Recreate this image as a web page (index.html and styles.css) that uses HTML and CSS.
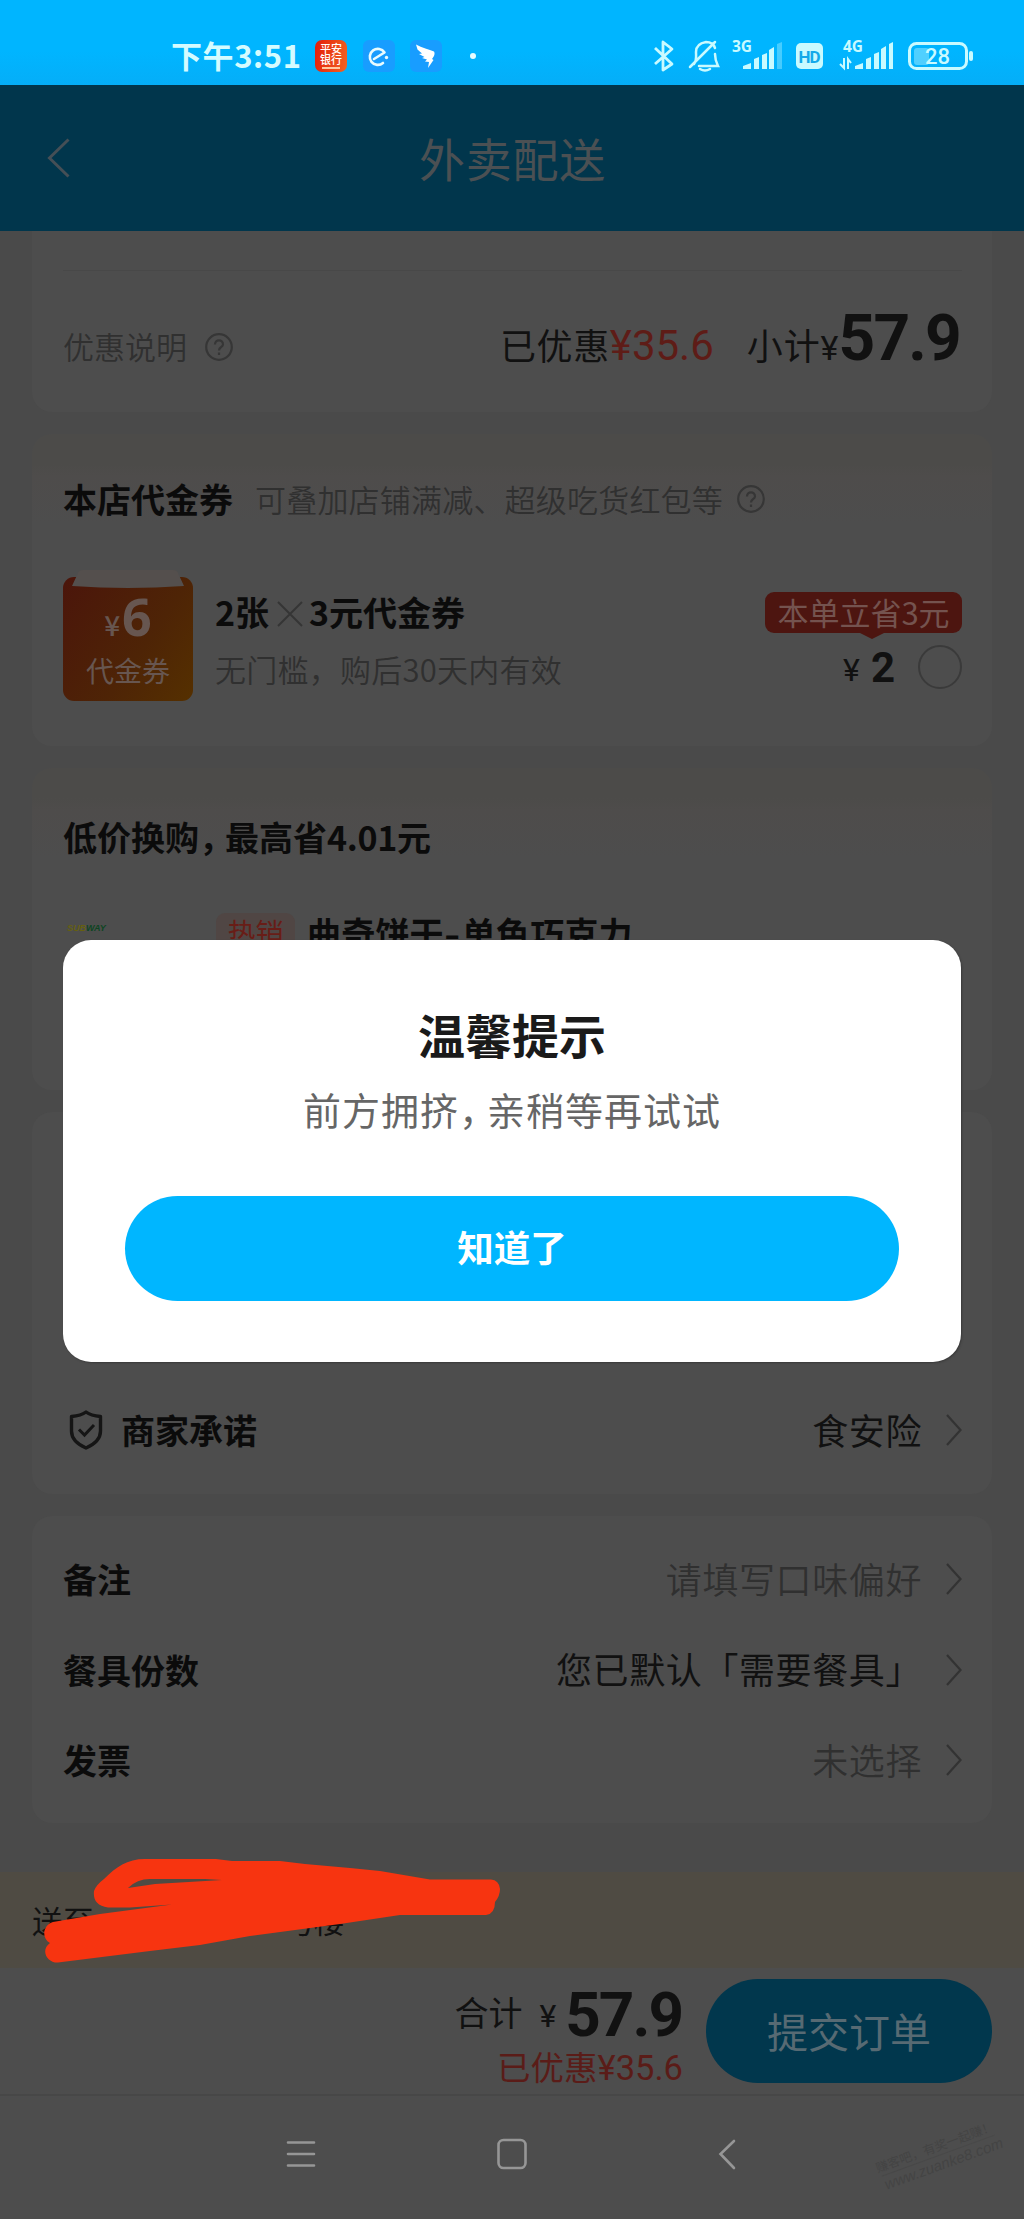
FILE: index.html
```html
<!DOCTYPE html>
<html lang="zh-CN">
<head>
<meta charset="utf-8">
<title>外卖配送</title>
<link rel="stylesheet" href="styles.css">
</head>
<body>
<div class="screen">
  <div class="status">
    <span class="clock">下午3:51</span>
    <span class="app bank"><span>平安</span><span>银行</span><i></i></span>
    <svg class="app" viewBox="0 0 32 32"><rect width="32" height="32" rx="6" fill="#189dff"/><path d="M11 19 21.5 12.5A8 8 0 1 0 20 23" fill="none" stroke="#e8fbff" stroke-width="2.6" stroke-linecap="round" stroke-linejoin="round"/><circle cx="23.500" cy="17.500" r="1.700" fill="#e8fbff"/></svg>
    <svg class="app" viewBox="0 0 32 32"><rect width="32" height="32" rx="6" fill="#189dff"/><path d="M6 4.500C12 8 19 9.500 24 11.500 25.500 14 23.500 17 22 19L23.500 20 18 28 19 22 15 21.500 17 19.500 12 18 14.500 17 9 14 12 13.500 7.500 9.500Z" fill="#fff"/></svg>
    <i class="dot"></i>
    <svg class="signals" width="324" height="40" viewBox="650 36 324 40" fill="none" stroke="#c9faff" stroke-width="3">
      <path d="M655 48 672 64 663 70V42L672 49 655 64" stroke-width="2.800" stroke-linejoin="round"/>
      <path d="M694 64C697 60 696 56 696 52 696 46 700 43 706 42 711 42 714 45 715 48M715 54C715 59 716 62 718 66H699M690 67 715 42M700 69Q705 72 710 69" stroke-width="2.500" stroke-linecap="round"/>
      <g fill="#c9faff" stroke="none">
        <path d="M743 69V66L751 63V69ZM754 59 759 57V69H754ZM762 55 767 53V69H762ZM769 50 774 47V69H769Z"/>
        <path d="M777 44 782 42V69H777Z" opacity=".35"/>
        <rect x="796" y="43" width="27" height="26" rx="5"/>
        <path d="M855 69V66L863 63V69ZM866 59 871 57V69H866ZM874 54 879 52V69H874ZM881 49 886 46V69H881ZM889 44 893 42V69H889Z"/>
        <rect x="969" y="51" width="4" height="10" rx="2"/>
        <rect x="914" y="48" width="15" height="17" rx="3" opacity=".4"/>
      </g>
      <path d="M840 64 844 68V58M851 63 848 59V69" stroke-width="2"/>
      <rect x="909.500" y="43.500" width="57" height="25" rx="7"/>
      <g stroke="none" fill="#c9faff" class="tiny">
        <text x="732" y="51.500">3G</text>
        <text x="843" y="51.500">4G</text>
        <text x="798.500" y="62.500" textLength="22" class="hd">HD</text>
        <text x="925" y="64" textLength="25" class="level">28</text>
      </g>
    </svg>
  </div>

  <header class="header">
    <svg class="back" width="24" height="42" viewBox="0 0 24 42"><path d="M21.500 2.500 2.500 21 21.500 39.500" fill="none" stroke="#454f56" stroke-width="3"/></svg>
    <h1>外卖配送</h1>
  </header>

  <main>
    <section class="card totals">
      <div class="rule"></div>
      <div class="row">
        <span class="muted small">优惠说明</span>
        <svg class="help" viewBox="0 0 28 28"><circle cx="14" cy="14" r="12.800"/><path d="M10 11.500C10 6 18 6 18 11.500 18 14.500 14 13.500 14 17.500"/><path d="M14 19.500V22"/></svg>
        <div class="sum"><span class="sub0">已优惠</span><span class="red num35">¥35.6</span><span class="sub">小计</span><span class="yen">¥</span><b class="big">57.9</b></div>
      </div>
    </section>

    <section class="card coupon tint">
      <div class="coupon-head"><b class="title">本店代金券</b><span class="muted small">可叠加店铺满减、超级吃货红包等</span>
        <svg class="help" viewBox="0 0 28 28"><circle cx="14" cy="14" r="12.800"/><path d="M10 11.500C10 6 18 6 18 11.500 18 14.500 14 13.500 14 17.500"/><path d="M14 19.500V22"/></svg>
      </div>
      <div class="coupon-body">
        <div class="voucher">
          <svg class="flap" width="130" height="20" viewBox="0 0 130 20"><path d="M15 3Q16 0 20 0H110Q114 0 115 3L121 16Q65 20 9 16Z" fill="#544f4d"/></svg>
          <div class="amount"><span>¥</span><b>6</b></div>
          <div class="kind">代金券</div>
        </div>
        <div class="offer">
          <div class="title">2张<svg width="26" height="26" viewBox="0 0 26 26"><path d="M1 1 25 25M25 1 1 25" stroke="#353535" stroke-width="2"/></svg>3元代金券</div>
          <div class="muted small">无门槛，购后30天内有效</div>
        </div>
        <div class="buy">
          <div class="badge">本单立省3元</div>
          <div class="price"><span>¥</span><b>2</b><i></i></div>
        </div>
      </div>
    </section>

    <section class="card swap tint">
      <div class="title">低价换购<span class="comma">，</span>最高省<span class="digits">4.01</span>元</div>
      <div class="product">
        <span class="logo"><em>SUB</em>WAY</span>
        <span class="tag">热销</span>
        <b class="title">曲奇饼干<span class="dash">-</span>单色巧克力</b>
      </div>
    </section>

    <section class="card promise">
      <div class="line">
        <svg class="shield" width="34" height="40" viewBox="0 0 34 40"><path d="M17 2C21 5 26 6 31.500 6.500V21C31.500 29 25 34.500 17 38 9 34.500 2.500 29 2.500 21V6.500C8 6 13 5 17 2Z" fill="none" stroke="#151515" stroke-width="3.400" stroke-linejoin="round"/><path d="M10 19.500 15.500 25 25 15" fill="none" stroke="#151515" stroke-width="3"/></svg>
        <b class="title">商家承诺</b><span class="value">食安险</span><svg class="go" viewBox="0 0 16 32"><path d="M1 1 14.500 16 1 31"/></svg>
      </div>
    </section>

    <section class="card options">
      <div class="line"><b class="title">备注</b><span class="value muted">请填写口味偏好</span><svg class="go" viewBox="0 0 16 32"><path d="M1 1 14.500 16 1 31"/></svg></div>
      <div class="line"><b class="title">餐具份数</b><span class="value">您已默认「需要餐具」</span><svg class="go" viewBox="0 0 16 32"><path d="M1 1 14.500 16 1 31"/></svg></div>
      <div class="line"><b class="title">发票</b><span class="value muted">未选择</span><svg class="go" viewBox="0 0 16 32"><path d="M1 1 14.500 16 1 31"/></svg></div>
    </section>
  </main>

  <div class="address"><span>送至:</span><span>号楼</span>
    <svg class="scribble" width="502" height="112" viewBox="0 1855 502 112"><path fill="#f73410" fill-rule="evenodd" d="M94 1891Q96 1885 104 1879C116 1867 127 1859 145 1859H216L232 1861H280L305 1864 350 1868 380 1871 430 1879.500H491Q499 1880 500 1889 500 1896 495 1902 495 1914 486 1915H400L340 1924 250 1936 200 1945 150 1951 58 1962.500C47 1963 40 1950 50 1943 41 1938 43 1925 53 1922L100 1914 172 1904.500 130 1907.500H108C97 1906 93 1900 94 1891ZM128 1888 155 1884 222 1880 205 1879H150Q137 1879 128 1888Z"/></svg>
  </div>

  <footer class="checkout">
    <div class="bill">
      <div class="total"><span>合计</span><span class="yen">¥</span><b>57.9</b></div>
      <div class="saved"><span>已优惠</span><span class="n">¥35.6</span></div>
    </div>
    <div class="submit">提交订单</div>
  </footer>

  <nav class="nav">
    <svg width="450" height="34" viewBox="286 2137 450 34" fill="none" stroke="#969696" stroke-width="2.600" stroke-linecap="round"><path d="M288 2142.500H314M288 2154H314M288 2165.500H314"/><rect x="498.500" y="2140" width="27" height="28" rx="5"/><path d="M734 2141 720.500 2154 734 2168"/></svg>
    <div class="mark"><span>赚客吧，有奖一起赚！</span><span>www.zuanke8.com</span></div>
  </nav>

  <div class="dialog">
    <h2>温馨提示</h2>
    <p>前方拥挤<span class="comma">，</span>亲稍等再试试</p>
    <div class="ok">知道了</div>
  </div>
</div>
</body>
</html>
```

FILE: styles.css
```css
* { box-sizing: border-box; }
body { margin: 0; background: #494949; font-family: "Noto Sans CJK SC", sans-serif; color: #111; }
h1, h2, p { margin: 0; }
svg { display: block; flex: none; }
b { font-weight: 700; }
span, b, h1, h2 { white-space: nowrap; }
.screen { position: relative; width: 1024px; height: 2219px; overflow: hidden; display: flex; flex-direction: column; }

.status { height: 85px; flex: none; display: flex; align-items: center; padding: 27px 50px 0 171px; background: linear-gradient(#00b5ff 60%, #05aef8); }
.clock { width: 144px; font-size: 31px; line-height: 32px; font-weight: 700; letter-spacing: .6px; margin-top: -2px; color: #d4fbff; }
.app { width: 32px; height: 32px; margin-right: 15.500px; flex: none; }
.bank { background: linear-gradient(100deg, #e41c08, #f26422); border-radius: 7px; color: #fff; font-size: 11px; line-height: 10.500px; font-weight: 500; text-align: center; padding-top: 3px; display: flex; flex-direction: column; }
.bank i { width: 18px; height: 2px; background: #ffc9a0; margin: 3px auto 0; }
.dot { width: 6px; height: 6px; border-radius: 50%; background: #e5fcff; margin-left: 12px; }
.signals { margin-left: auto; }
.tiny { font: 700 15.500px "Open Sans", sans-serif; }
.hd { font: 700 17px Roboto, sans-serif; fill: #14a9ea; }
.level { font: 500 22px Roboto, sans-serif; }

.header { height: 146px; flex: none; background: #01364c; display: flex; align-items: center; padding: 0 0 0 47px; }
.header h1 { flex: 1; margin: -2px 70px 0 0; text-align: center; font-size: 46px; line-height: 60px; letter-spacing: .8px; font-weight: 400; color: #4b5053; }

main { padding: 0 32px; height: 1641px; flex: none; background: #4a4a4a; }
.card { background: #4d4d4d; border-radius: 20px; padding: 0 30px 0 31px; margin-bottom: 22px; }
.tint { background: linear-gradient(#4c4b49 0 30px, #4e4c4b 42px, #4d4d4d 90px); }
.muted { color: #303030; font-weight: 350; }
.small { font-size: 31px; line-height: 40px; }
.title { font-size: 34px; line-height: 44px; font-weight: 700; color: #0b0b0b; }
.red { color: #5e1c17; }
.help { width: 28px; height: 28px; fill: none; stroke: #363636; stroke-width: 2.200; }

.totals { height: 181px; border-radius: 0 0 20px 20px; }
.rule { height: 40px; border-bottom: 1px solid #484848; }
.row { height: 141px; padding-top: 9px; display: flex; align-items: center; }
.row .help { margin-left: 18px; margin-top: 2px; }
.sum { margin: -5px 2px 0 auto; display: flex; align-items: baseline; font-size: 36px; line-height: 60px; }
.sub0 { letter-spacing: .6px; }
.num35 { font-family: Roboto, sans-serif; font-size: 42px; }
.sub { margin-left: 33px; letter-spacing: .9px; }
.yen { font-family: Roboto, sans-serif; font-size: 34px; }
.big { font-family: Roboto, sans-serif; font-size: 64px; letter-spacing: -1.800px; }

.coupon { height: 312px; }
.coupon-head { height: 131px; padding-bottom: 2px; display: flex; align-items: center; }
.coupon-head .small { margin-left: 22px; letter-spacing: .2px; }
.coupon-head .help { margin-left: 14px; }
.coupon-body { display: flex; }
.voucher { position: relative; width: 130px; height: 124px; margin: 12px 0 0 0; border-radius: 11px; background: linear-gradient(125deg, #4b150b, #4e2406 60%, #553000); color: #675650; text-align: center; }
.flap { position: absolute; left: 0; top: -7px; }
.amount { height: 72px; padding-top: 13px; display: flex; justify-content: center; align-items: baseline; line-height: 52px; gap: 2px; }
.amount span { font-size: 28px; font-weight: 500; }
.amount b { font-family: "Noto Sans", sans-serif; font-size: 52px; }
.kind { font-size: 28px; line-height: 42px; }
.offer { margin: 25px 0 0 22px; }
.offer .title { display: flex; align-items: center; }
.offer .title svg { margin: 3px 6px 0 8px; }
.offer .small { margin-top: 15px; letter-spacing: .25px; }
.buy { margin: 27px 0 0 auto; display: flex; flex-direction: column; align-items: flex-end; }
.badge { position: relative; width: 197px; height: 41px; border-radius: 9px; background: #4d1510; color: #74534f; text-align: center; font-size: 31px; line-height: 40px; white-space: nowrap; }
.badge::after { content: ""; position: absolute; left: 95px; bottom: -6px; border: solid transparent; border-width: 0 12px; border-top: 6px solid #4d1510; }
.price { display: flex; align-items: center; height: 44px; margin-top: 12px; font-family: Roboto, sans-serif; }
.price span { font-size: 32px; margin: 6px 11px 0 0; }
.price b { font-size: 42px; margin-right: 23px; }
.price i { width: 44px; height: 44px; border: 2px solid #3a3a3a; border-radius: 50%; }

.swap { height: 322px; padding-top: 47px; }
.swap > .title { height: 44px; }
.comma { font-feature-settings: "halt"; margin-right: 8px; }
.title .comma { margin-right: 9px; }
.digits { letter-spacing: -.3px; }
.product { display: flex; margin-top: 54px; }
.logo { width: 153px; padding: 10px 0 0 4px; font: italic 900 9px "Liberation Sans", sans-serif; color: #0d4522; }
.logo em { color: #666010; }
.tag { width: 79px; height: 50px; border-radius: 9px; background: #504644; color: #681d17; text-align: center; font-size: 28px; line-height: 38px; margin-right: 12px; }
.product .title { margin-top: -2px; letter-spacing: .2px; }
.dash { display: inline-block; width: 18px; transform: scaleX(1.300); transform-origin: left; }

.line { display: flex; align-items: center; }
.line .value { margin: -3px 0 0 auto; font-size: 36px; letter-spacing: .6px; line-height: 50px; }
.value + .go { margin-left: 24px; }
.go { width: 16px; height: 32px; fill: none; stroke: #333; stroke-width: 2.200; }
.promise { height: 382px; padding-top: 293px; }
.promise .line { height: 50px; }
.shield { margin: 0 18px 0 6px; }
.options { height: 307px; padding-top: 38px; }
.options .line { height: 50px; margin-bottom: 40.500px; }

.address { position: relative; height: 96px; flex: none; padding: 0 0 0 32px; background: #4f4b43; display: flex; align-items: center; font-size: 31px; }
.address span { height: 46px; line-height: 46px; }
.address span + span { margin-left: 182px; letter-spacing: -2px; }
.scribble { position: absolute; left: 0; top: -17px; }

.checkout { height: 128px; flex: none; background: #4d4d4d; border-bottom: 2px solid #474747; display: flex; justify-content: flex-end; padding: 11px 32px 0 0; }
.submit { width: 286px; height: 104px; border-radius: 52px; background: #01374d; color: #576a73; font-size: 41px; line-height: 103px; text-align: center; margin-left: 23px; }
.bill { display: flex; flex-direction: column; align-items: flex-end; }
.total { display: flex; align-items: center; font-size: 34px; line-height: 56px; height: 65px; }
.total .yen { font-size: 32px; margin: 8px 9px 0 17px; }
.total b { font-family: Roboto, sans-serif; font-size: 62px; letter-spacing: -2px; margin: 7px 1px 0 0; }
.saved { display: flex; align-items: baseline; height: 44px; line-height: 44px; font-size: 33.500px; color: #5a1c18; }
.saved .n { font-family: Roboto, sans-serif; font-size: 34.500px; }

.nav { height: 123px; flex: none; background: #4d4d4d; display: flex; padding: 41px 0 0 286px; }
.mark { width: 160px; margin: -1px 0 0 123px; height: 44px; transform: rotate(-20deg); color: #444; font-size: 12.500px; line-height: 19px; text-align: center; display: flex; flex-direction: column; }
.mark span + span { font: italic 15px/18px "Liberation Sans", sans-serif; border-top: 1px solid #484848; margin: 0 20px; }

.dialog { position: absolute; left: 63px; top: 940px; width: 898px; height: 422px; border-radius: 28px; background: #fff; box-shadow: 1px 1px 2px #3a3a3a; text-align: center; padding: 64px 62px 0; }
.dialog h2 { font-size: 47px; line-height: 60px; color: #1a1a1a; font-weight: 700; }
.dialog p { font-size: 38px; letter-spacing: 1px; line-height: 50px; margin-top: 20px; color: #666; }
.ok { height: 105px; margin-top: 62px; border-radius: 53px; background: #00b6ff; color: #fff; font-size: 36.500px; line-height: 102px; font-weight: 700; }
```
